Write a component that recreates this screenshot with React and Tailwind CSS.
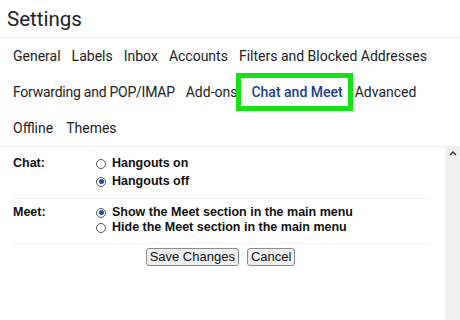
import React from "react";

const tabFont = { fontFamily: "Roboto, 'Noto Sans', sans-serif" };

const Tab = ({ children, active, tight }) => (
  <span
    className={`text-[14px] leading-none whitespace-nowrap ${
      active ? "text-[#1a3f8f] font-medium" : "text-[#202124]"
    } ${tight ? "tracking-[-0.25px]" : ""}`}
  >
    {children}
  </span>
);

const Radio = ({ checked }) => (
  <span className="w-[10px] h-[10px] rounded-full border border-[#555] bg-white flex items-center justify-center shrink-0">
    {checked && <span className="w-[5px] h-[5px] rounded-full bg-[#1a4fa8]" />}
  </span>
);

const Option = ({ checked, children }) => (
  <div className="flex items-center gap-[6px]">
    <Radio checked={checked} />
    <span>{children}</span>
  </div>
);

const App = () => {
  return (
    <div className="w-[460px] h-[320px] bg-white overflow-hidden flex flex-col" style={tabFont}>
      <div className="h-[38px] pl-[7px] pt-[6px] border-b border-[#f2f2f2]">
        <h1 className="text-[20.5px] leading-[26px] text-[#202124]">Settings</h1>
      </div>

      <div className="flex flex-col pl-[13px] border-b border-[#f2f2f2]">
        <div className="h-[36px] flex items-center gap-[11px]">
          <Tab>General</Tab>
          <Tab>Labels</Tab>
          <Tab>Inbox</Tab>
          <Tab>Accounts</Tab>
          <Tab>Filters and Blocked Addresses</Tab>
        </div>
        <div className="h-[36px] flex items-center gap-[11px]">
          <Tab tight>Forwarding and POP/IMAP</Tab>
          <Tab>Add-ons</Tab>
          <span className="relative h-[38px] -my-[1px] -ml-[12px] -mr-[9px] flex items-center pl-[10px] pr-[5px] border-[5px] border-[#16e016] bg-white">
            <Tab active>Chat and Meet</Tab>
          </span>
          <Tab>Advanced</Tab>
        </div>
        <div className="h-[36px] flex items-center gap-[13px]">
          <Tab>Offline</Tab>
          <Tab>Themes</Tab>
        </div>
      </div>

      <div className="flex flex-1">
        <div
          className="flex-1 pl-[13px] pr-[17px] text-[12.5px] leading-[15px] font-bold text-[#111]"
          style={{ fontFamily: "'Liberation Sans', Arial, sans-serif" }}
        >
          <div className="flex pt-[9px] pb-[9px] border-b border-[#f0f0f0]">
            <div className="w-[83px]">Chat:</div>
            <div className="flex flex-col gap-[3px]">
              <Option>Hangouts on</Option>
              <Option checked>Hangouts off</Option>
            </div>
          </div>
          <div className="flex pt-[6px] pb-[8px] border-b border-[#f0f0f0]">
            <div className="w-[83px]">Meet:</div>
            <div className="flex flex-col">
              <Option checked>Show the Meet section in the main menu</Option>
              <Option>Hide the Meet section in the main menu</Option>
            </div>
          </div>
          <div className="flex justify-center gap-[8px] pt-[4px] font-normal text-[13px]">
            <button className="px-[3px] h-[18px] leading-[16px] border border-[#8a8a8a] rounded-[3px] bg-[#efefef]">
              Save Changes
            </button>
            <button className="px-[3px] h-[18px] leading-[16px] border border-[#8a8a8a] rounded-[3px] bg-[#efefef]">
              Cancel
            </button>
          </div>
        </div>
        <div className="w-[15px] bg-[#f0f0f0] flex justify-center pt-[3px]">
          <svg width="8" height="6" viewBox="0 0 8 6">
            <path d="M1 5 L4 2 L7 5" fill="none" stroke="#333" strokeWidth="1.4" />
          </svg>
        </div>
      </div>
    </div>
  );
};

export default App;
